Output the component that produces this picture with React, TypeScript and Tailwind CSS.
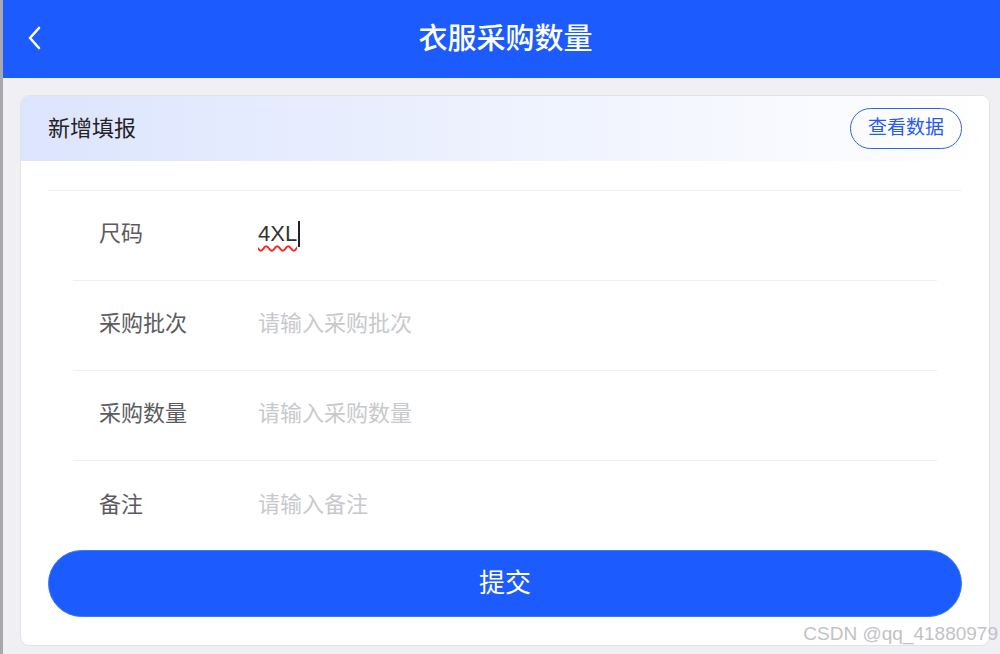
const FONT = "font-['Liberation_Sans','Noto_Sans_CJK_SC',sans-serif]";

const rows = [
  { label: "尺码", value: "4XL", placeholder: "" },
  { label: "采购批次", value: "", placeholder: "请输入采购批次" },
  { label: "采购数量", value: "", placeholder: "请输入采购数量" },
  { label: "备注", value: "", placeholder: "请输入备注" },
];

export default function App() {
  return (
    <div className={`${FONT} flex h-[654px] w-[1000px] overflow-hidden bg-[#efeff4]`}>
      {/* window edge */}
      <div className="w-[3px] shrink-0 bg-[#a9a9ad]" />

      <div className="relative flex flex-1 flex-col">
        {/* HEADER */}
        <div className="relative flex h-[78px] shrink-0 items-center justify-center bg-[#1c5bfe]">
          <svg
            className="absolute left-[24px] top-[26px]"
            width="16"
            height="24"
            viewBox="0 0 16 24"
            fill="none"
          >
            <path d="M12 2 L3 12 L12 22" stroke="white" strokeWidth="2.6" strokeLinecap="round" strokeLinejoin="round" />
          </svg>
          <h1 className="pl-[8px] pt-[2px] text-[29px] font-medium text-white">衣服采购数量</h1>
        </div>

        {/* CARD */}
        <div className="ml-[17px] mt-[17px] flex h-[551px] w-[970px] flex-col overflow-hidden rounded-[9px] border border-[#e3e3e6] bg-white">
          <div className="flex h-[65px] shrink-0 items-center justify-between bg-gradient-to-r from-[#dce5fe] via-[#eef2fe] to-white pl-[27px] pr-[27px]">
            <span className="text-[22px] text-[#222]">新增填报</span>
            <button className="flex h-[41px] w-[112px] items-center justify-center rounded-full border border-[#2d62f5] text-[19px] text-[#2859f0]">
              查看数据
            </button>
          </div>

          <div className="mx-[27px] mt-[29px] border-t border-[#f1f1f3]" />

          <div className="mx-[52px]">
            {rows.map((r, i) => (
              <div
                key={r.label}
                className={`flex h-[90px] items-center pb-[4px] ${i < rows.length - 1 ? "border-b border-[#f0f0f2]" : ""}`}
              >
                <span className="ml-[26px] w-[159px] text-[22px] text-[#5b5b5f]">{r.label}</span>
                {r.value ? (
                  <span className="relative flex items-center text-[22px] text-[#333]">
                    <span className="underline decoration-wavy decoration-[#ff2020] decoration-[1.5px] underline-offset-[4px]">
                      {r.value}
                    </span>
                    <span className="ml-[1px] h-[26px] w-[2px] bg-[#222]" />
                  </span>
                ) : (
                  <span className="text-[22px] text-[#c8c9cc]">{r.placeholder}</span>
                )}
              </div>
            ))}
          </div>

          <div className="mx-[27px] -mt-[1px]">
            <button className="flex h-[67px] w-full items-center justify-center rounded-full border border-[#3a7bf5] bg-[#1c5bfe] text-[26px] text-white">
              提交
            </button>
          </div>
        </div>

        {/* watermark */}
        <div className="absolute bottom-[6px] right-[2px] text-[19px] text-[#c2c2c6]">CSDN @qq_41880979</div>
      </div>
    </div>
  );
}
